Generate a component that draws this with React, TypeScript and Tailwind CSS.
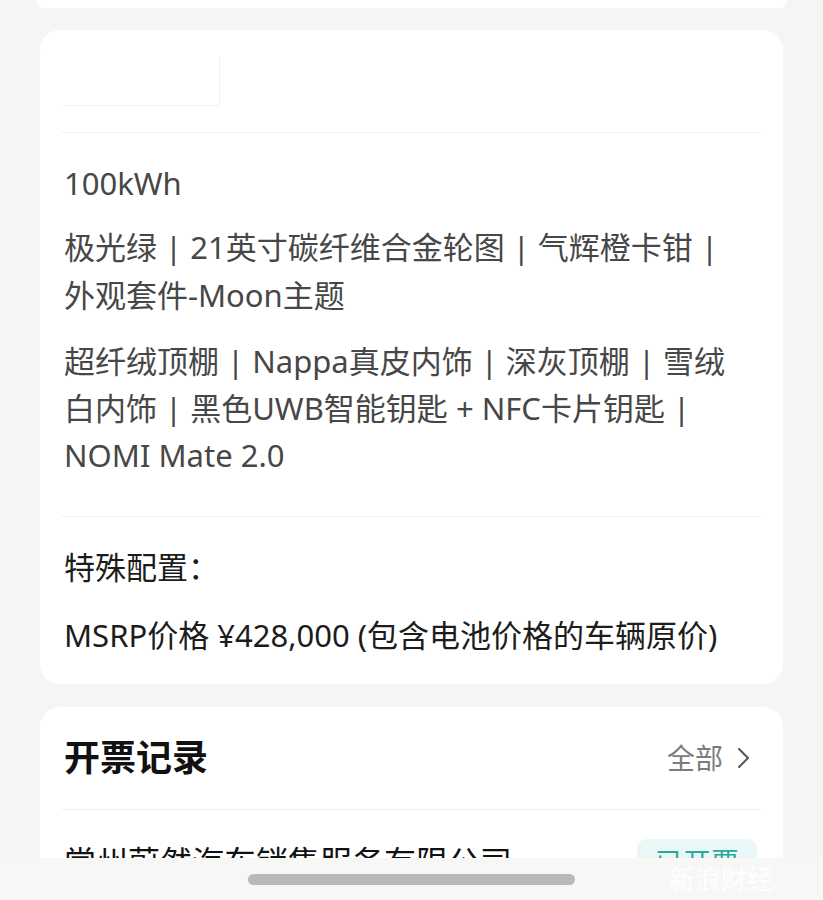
import React from 'react'

const font = { fontFamily: '"Noto Sans", "Noto Sans CJK SC", sans-serif' }

export default function App() {
  return (
    <div style={font} className="relative h-[900px] w-full overflow-hidden bg-[#f5f5f3]">
      {/* previous card tail */}
      <div className="mx-[36px] h-[8px] rounded-b-[18px] bg-white" />

      {/* vehicle config card */}
      <div className="mx-[40px] mt-[22px] rounded-[20px] bg-white px-[22px] pb-[25px]">
        <div className="flex h-[102px] items-center">
          <div className="h-[50px] w-[158px] border-r border-b border-[#eef0f4]" />
        </div>
        <div className="h-px bg-[#efefef]" />

        <div className="px-[2px] pb-[37px] pt-[26px] text-[31px] leading-[48px] text-[#474747]">
          <p>100kWh</p>
          <p className="mt-[16px]">
            <span className="block">极光绿 | 21英寸碳纤维合金轮图 | 气辉橙卡钳 |</span>
            <span className="block">外观套件-Moon主题</span>
          </p>
          <p className="mt-[19px] leading-[47px]">
            <span className="block">超纤绒顶棚 | Nappa真皮内饰 | 深灰顶棚 | 雪绒</span>
            <span className="block">白内饰 | 黑色UWB智能钥匙 + NFC卡片钥匙 |</span>
            <span className="block">NOMI Mate 2.0</span>
          </p>
        </div>
        <div className="h-px bg-[#efefef]" />

        <div className="px-[2px] pt-[26px] text-[31px] leading-[48px] text-[#1c1c1c]">
          <p>特殊配置：</p>
          <p className="mt-[20px]">MSRP价格 ¥428,000 (包含电池价格的车辆原价)</p>
        </div>
      </div>

      {/* invoice card */}
      <div className="mx-[40px] mt-[23px] rounded-t-[20px] bg-white px-[22px]">
        <div className="flex h-[102px] items-center justify-between pl-[2px] pr-[10px]">
          <span className="text-[36px] font-bold text-[#111]">开票记录</span>
          <span className="flex items-center gap-[14px] text-[28px] text-[#7c7c7c]">
            全部
            <svg width="14" height="24" viewBox="0 0 14 24" fill="none" stroke="#555" strokeWidth="2" strokeLinecap="round" strokeLinejoin="round">
              <path d="M2 3l9 9-9 9" />
            </svg>
          </span>
        </div>
        <div className="h-px bg-[#efefef]" />
        <div className="flex items-center justify-between pl-[2px] pt-[28px]">
          <span className="text-[32px] text-[#111]">常州蔚然汽车销售服务有限公司</span>
          <span className="mr-[4px] rounded-[10px] bg-[#e9f8f6] px-[18px] py-[2px] text-[28px] text-[#2fa89c]">已开票</span>
        </div>
      </div>

      {/* bottom system bar */}
      <div className="absolute bottom-0 left-0 right-0 flex h-[42px] items-start justify-center bg-[#f7f7f5] pt-[16px]">
        <div className="h-[11px] w-[327px] rounded-full bg-[#b9b9b9]" />
        <span className="absolute right-[50px] top-[8px] text-[26px] leading-none text-white/90">新浪财经</span>
      </div>
    </div>
  )
}
